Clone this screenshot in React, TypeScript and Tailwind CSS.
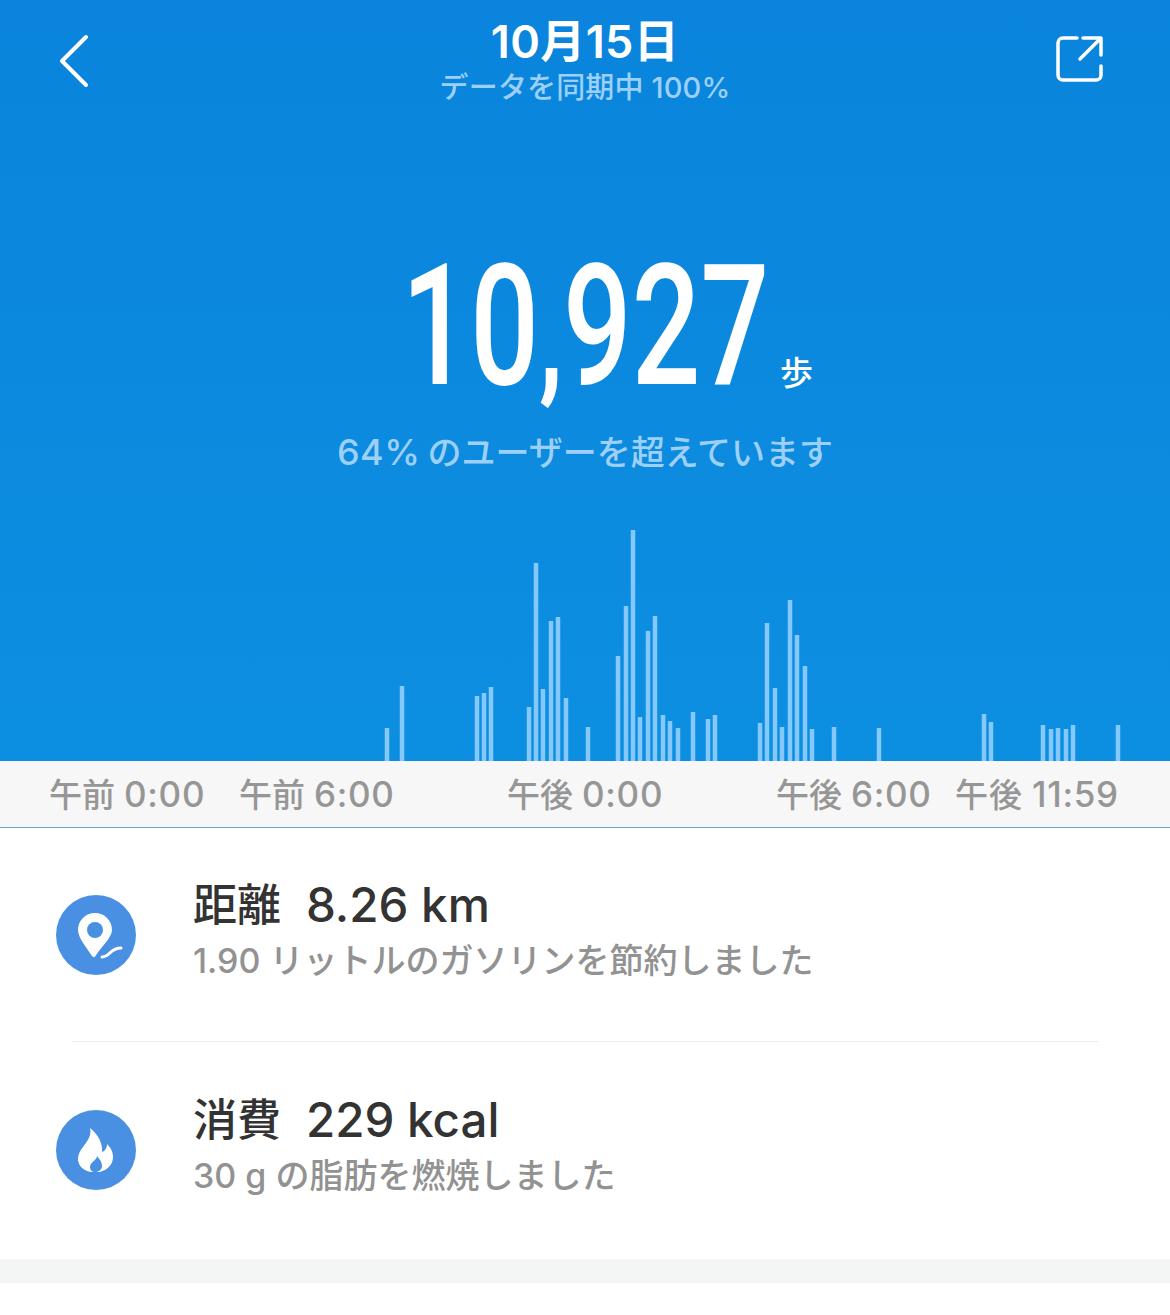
const FONT = "font-['Inter','Noto_Sans_CJK_JP',sans-serif]";

// [x center, top y] in page pixels; every bar ends on the axis band at y=761
const BARS: [number, number][] = [
  [387, 728], [402, 686], [477, 696], [484, 693], [491, 687], [529, 707], [536, 563], [543, 689],
  [551, 621], [558, 617], [566, 698], [588, 727], [618, 656], [626, 606], [633, 530], [640, 717],
  [648, 631], [655, 616], [663, 715], [670, 721], [678, 728], [693, 712], [708, 719], [715, 715],
  [760, 723], [767, 623], [775, 688], [782, 727], [790, 600], [797, 635], [805, 666], [812, 729],
  [834, 727], [879, 728], [984, 714], [991, 722], [1043, 725], [1051, 729], [1058, 728], [1066, 729],
  [1073, 725], [1118, 725],
];

function StepChart() {
  return (
    <svg width="1170" height="241" viewBox="0 520 1170 241" className="block">
      {BARS.map(([x, top]) => (
        <rect key={x} x={x - 2.25} y={top} width="4.5" height={761 - top} fill="#84c8fc" />
      ))}
    </svg>
  );
}

function PinIcon() {
  return (
    <svg width="80" height="80" viewBox="0 0 80 80" className="shrink-0">
      <circle cx="40" cy="40" r="40" fill="#4a90e2" />
      <path
        d="M39 18c-9.500 0-17 7.500-17 17 0 8 9 18 14 26 1 1.500 2.500 1.500 3.500 0C44 53 56 43 56 35c0-9.500-7.500-17-17-17z"
        fill="#fff"
      />
      <circle cx="39" cy="35" r="8" fill="#4a90e2" />
      <path d="M46 62c8 0 8-9 19-9" fill="none" stroke="#fff" strokeWidth="3" strokeLinecap="round" />
    </svg>
  );
}

function FlameIcon() {
  return (
    <svg width="80" height="80" viewBox="0 0 80 80" className="shrink-0">
      <circle cx="40" cy="40" r="40" fill="#4a90e2" />
      <path
        d="M34 18C36 26 31 31 27 37 24 41 22 44 22 49 22 56 28 61 35 62L44 62C51 60 57 55 57 47 57 41 54 37 51 34 51 38 49 41 46 42 47 34 42 24 34 18Z"
        fill="#fff"
      />
      <path d="M41 46C41 50 34 52 34 57 34 60 36 62 39 62 42 62 46 60 46 56 46 51 43 49 41 46Z" fill="#4a90e2" />
    </svg>
  );
}

function AxisLabel({ period, time, className }: { period: string; time: string; className: string }) {
  return (
    <span className={className}>
      {period}
      <span className="ml-[9px] text-[35px] tracking-[0.7px]">{time}</span>
    </span>
  );
}

function StatRow({ icon, label, value, note, className }: { icon: React.ReactNode; label: string; value: string; note: string; className: string }) {
  return (
    <div className={`flex items-center pl-[56px] ${className}`}>
      {icon}
      <div className="ml-[57px] mb-[12px]">
        <div className="flex items-center h-[56px] text-[47.5px] font-medium text-[#333333]">
          <span className="text-[44px]">{label}</span>
          <span className="ml-[25px]">{value}</span>
        </div>
        <div className="mt-[8px] h-[40px] leading-[40px] text-[34px] font-medium text-[#929292]">{note}</div>
      </div>
    </div>
  );
}

export default function App() {
  return (
    <div className={`w-[1170px] h-[1315px] bg-white overflow-hidden ${FONT}`}>
      <div className="h-[761px] bg-gradient-to-b from-[#0a84dc] to-[#0d8fe1]">
        <div className="relative h-[520px]">
          <header className="flex justify-between px-[58px] pt-[34px]">
            <svg width="32" height="54" viewBox="0 0 32 54" fill="none" stroke="#fff" strokeWidth="4" strokeLinecap="round" strokeLinejoin="round">
              <path d="M28 3 4 27l24 24" />
            </svg>
            <svg width="48" height="48" viewBox="0 0 48 48" fill="none" stroke="#fff" strokeWidth="3.500" strokeLinecap="round" strokeLinejoin="round" className="mr-[8px]">
              <path d="M21 4H7a5 5 0 0 0-5 5v32a5 5 0 0 0 5 5h33a5 5 0 0 0 5-5v-9" />
              <path d="M24 25 45 4M27 4h18v17" />
            </svg>
          </header>
          <div className="absolute top-[16px] inset-x-0 text-center">
            <div className="h-[52px] leading-[52px] text-[45px] font-semibold tracking-[0.4px] text-white">10月15日</div>
            <div className="mt-[2px] h-[36px] leading-[36px] text-[29px] font-medium tracking-[0.15px] text-[#9dd0f8]">データを同期中 100%</div>
          </div>
          <div className="absolute top-[227px] inset-x-0 h-[200px] text-center">
            <span className="inline-block origin-center scale-x-[0.72] font-['Roboto',sans-serif] font-medium text-[168px] leading-[200px] text-white">
              10<span className="text-[135px] font-bold">,</span>927
            </span>
            <span className="absolute left-[780px] top-[124px] text-[33px] leading-[44px] font-medium text-white">歩</span>
          </div>
          <div className="absolute top-[430px] inset-x-0 h-[44px] leading-[44px] text-center text-[34px] font-medium text-[#9dd0f8]">
            <span className="text-[36px] tracking-[0.5px]">64%</span>
            <span className="ml-[7px]">のユーザーを超えています</span>
          </div>
        </div>
        <StepChart />
      </div>

      <div className="flex items-center h-[67px] bg-[#f7f7f7] border-b border-[#6aa8d4] text-[33px] font-medium text-[#969696]">
        <AxisLabel className="ml-[49px] w-[190px]" period="午前" time="0:00" />
        <AxisLabel className="w-[268px]" period="午前" time="6:00" />
        <AxisLabel className="w-[269px]" period="午後" time="0:00" />
        <AxisLabel className="w-[179px]" period="午後" time="6:00" />
        <AxisLabel className="tracking-[1px]" period="午後" time="11:59" />
      </div>

      <StatRow className="h-[213px]" icon={<PinIcon />} label="距離" value="8.26 km" note="1.90 リットルのガソリンを節約しました" />
      <div className="mx-[72px] h-px bg-[#ececec]" />
      <StatRow className="h-[215px] mb-[2px]" icon={<FlameIcon />} label="消費" value="229 kcal" note="30 g の脂肪を燃焼しました" />
      <div className="h-[24px] bg-[#f4f5f5]" />
    </div>
  );
}
